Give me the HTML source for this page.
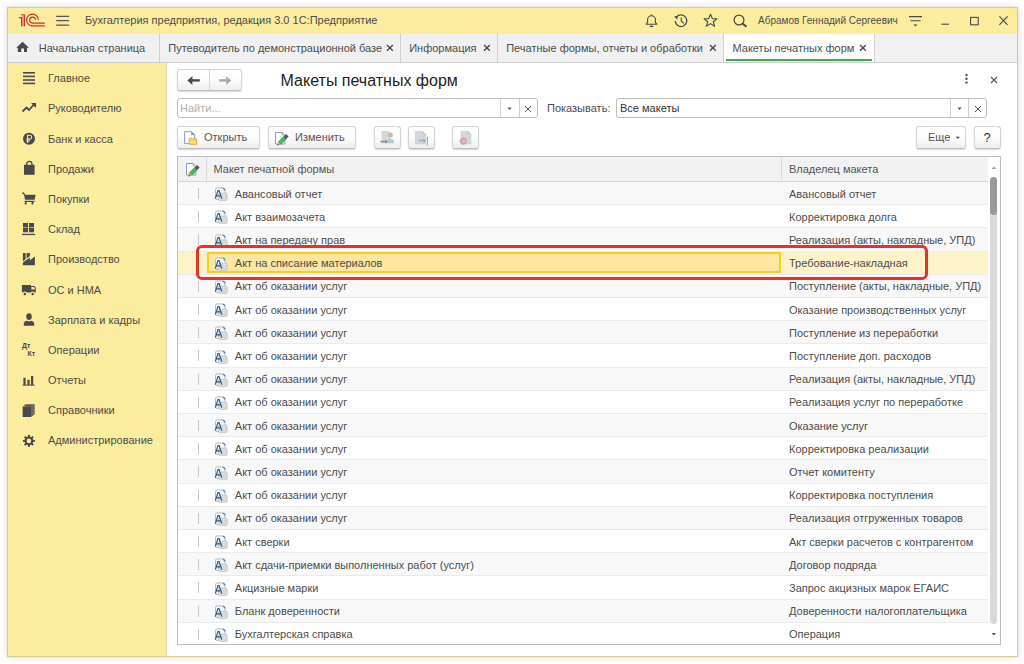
<!DOCTYPE html>
<html><head><meta charset="utf-8">
<style>
*{box-sizing:border-box;margin:0;padding:0}
html,body{width:1024px;height:664px;overflow:hidden;background:#fff;font-family:"Liberation Sans",sans-serif;font-size:11px;color:#4d4d4d}
.a{position:absolute}
.t{position:absolute;line-height:13px;white-space:nowrap}
svg{overflow:visible}
#win{left:7px;top:7px;width:1011px;height:650px;border:1px solid #dacb86;background:#fbec9e;box-shadow:0 0 7px rgba(0,0,0,.16)}
#tabs{left:8px;top:34px;width:1009px;height:29px;background:#f1f1f1;border-bottom:1px solid #cfcfcf}
#side{left:8px;top:63px;width:159px;height:593px;background:#fbec9e}
#main{left:167px;top:63px;width:850px;height:593px;background:#fff}
.tabsep{position:absolute;top:34px;width:1px;height:28px;background:#d0d0d0}
.btn{position:absolute;border:1px solid #d4d4d4;border-bottom-color:#bfbfbf;border-radius:3px;background:linear-gradient(#fff 0%,#fdfdfd 45%,#eeeeee 100%);box-shadow:0 1px 1.5px rgba(0,0,0,.16)}
.fld{position:absolute;border:1px solid #bcbcbc;border-radius:3px;background:#fff}
#tbl{left:177px;top:156px;width:824px;height:489px;border:1px solid #bdbdbd;background:#fff;overflow:hidden}
.row{position:absolute;left:0;width:810px;border-bottom:1px solid #ebebeb}
.row.g{background:#f8f8f8}
.tl{position:absolute;left:20px;width:1px;height:11px;background:#c8c8c8}
.c1{position:absolute;left:56.8px;line-height:13px;white-space:nowrap}
.c2{position:absolute;left:611px;line-height:13px;white-space:nowrap}
.x{position:absolute}
</style></head><body>
<div id="win" class="a"></div>

<svg class="a" style="left:0;top:0" width="50" height="32" viewBox="0 0 50 32">
 <rect x="22" y="15.2" width="2.2" height="11" fill="#eea08a"/>
 <g fill="none" stroke="#dc2a2a" stroke-width="1.15">
  <path d="M19 17.6 H21.6 V26.3"/>
  <path d="M21.2 14.7 H24.5 V26.3"/>
  <path d="M38.4 19.8 A5.9 5.9 0 1 0 32.4 25.9 H44.8"/>
  <path d="M35.6 19.8 A3 3 0 1 0 32.4 23.1 H44.8"/>
 </g>
</svg>
<svg class="a" style="left:56px;top:15px" width="14" height="12"><g stroke="#555" stroke-width="1.2" stroke-linecap="round"><path d="M0.7 1.45H12.7M0.7 5.6H12.7M0.7 10.2H12.7"/></g></svg>
<div class="t" style="left:85px;top:14.2px">Бухгалтерия предприятия, редакция 3.0 1С:Предприятие</div>

<svg class="a" style="left:644px;top:13px" width="15" height="15"><path d="M2.2 11.2 H12.8 L11.4 9.4 V6.6 a3.9 3.9 0 0 0 -7.8 0 V9.4 Z" fill="none" stroke="#4a4a4a" stroke-width="1.1" stroke-linejoin="round"/><path d="M7.5 1.4 V2.6" stroke="#4a4a4a" stroke-width="1.2"/><path d="M5.8 13.3 H9.2" stroke="#4a4a4a" stroke-width="1.4"/></svg>
<svg class="a" style="left:673px;top:13px" width="16" height="15"><path d="M3.4 4.2 A5.8 5.8 0 1 1 2.2 8" fill="none" stroke="#4a4a4a" stroke-width="1.2"/><path d="M1 3.4 L4.6 3 L4.2 6.4 Z" fill="#4a4a4a"/><path d="M8.2 4.6 V8 L10.8 10.4" fill="none" stroke="#4a4a4a" stroke-width="1.1"/></svg>
<svg class="a" style="left:703px;top:13px" width="15" height="15"><path d="M7.5 1.2 L9.3 5.6 L13.9 5.8 L10.3 8.7 L11.6 13.2 L7.5 10.6 L3.4 13.2 L4.7 8.7 L1.1 5.8 L5.7 5.6 Z" fill="none" stroke="#4a4a4a" stroke-width="1.1" stroke-linejoin="round"/></svg>
<svg class="a" style="left:733px;top:14px" width="15" height="14"><circle cx="6" cy="6" r="4.9" fill="none" stroke="#4a4a4a" stroke-width="1.2"/><path d="M9.6 9.6 L13.4 12.8" stroke="#4a4a4a" stroke-width="2"/></svg>
<div class="t" style="left:758px;top:14.2px;font-size:10px">Абрамов Геннадий Сергеевич</div>
<svg class="a" style="left:908px;top:14px" width="15" height="14"><path d="M1 2.6 H14 M2.4 6.7 H12.6" stroke="#4a4a4a" stroke-width="1.1"/><path d="M5.3 10.4 H9.5 L7.4 12.6 Z" fill="#4a4a4a"/></svg>
<svg class="a" style="left:940px;top:14px" width="10" height="12"><path d="M1.4 10.2 H9" stroke="#4a4a4a" stroke-width="1.1"/></svg>
<svg class="a" style="left:969px;top:16px" width="11" height="10"><rect x="1.6" y="1.4" width="7.6" height="7.4" fill="none" stroke="#4a4a4a" stroke-width="1.1"/></svg>
<svg class="a" style="left:998px;top:15px" width="11" height="11"><path d="M1.4 1.4 L9.6 9.8 M9.6 1.4 L1.4 9.8" stroke="#4a4a4a" stroke-width="1.1"/></svg>

<div id="tabs" class="a"></div>
<div class="a" style="left:724px;top:34px;width:150px;height:28px;background:#fff"></div>
<div class="a" style="left:726px;top:59px;width:146px;height:2px;background:#3fae49"></div>
<div class="tabsep" style="left:159px"></div>
<div class="tabsep" style="left:400px"></div>
<div class="tabsep" style="left:497px"></div>
<div class="tabsep" style="left:723px"></div>
<div class="tabsep" style="left:874px"></div>
<svg class="a" style="left:15px;top:40px" width="16" height="14"><path d="M7.6 1.8 L14 7.8 H12 V11.9 H9 V8.4 H6.2 V11.9 H2.8 V7.8 H1.2 Z" fill="#4a4a4a"/></svg>
<div class="t" style="left:38.8px;top:41.5px">Начальная страница</div>
<div class="t" style="left:168.3px;top:41.5px">Путеводитель по демонстрационной базе</div>
<svg class="a" style="left:386.09999999999997px;top:44.3px" width="8" height="8"><path d="M1 1 L6.8 6.8 M6.8 1 L1 6.8" stroke="#4a4a4a" stroke-width="1.35"/></svg>
<div class="t" style="left:409.2px;top:41.5px">Информация</div>
<svg class="a" style="left:483.0px;top:44.3px" width="8" height="8"><path d="M1 1 L6.8 6.8 M6.8 1 L1 6.8" stroke="#4a4a4a" stroke-width="1.35"/></svg>
<div class="t" style="left:506.2px;top:41.5px">Печатные формы, отчеты и обработки</div>
<svg class="a" style="left:709.4px;top:44.3px" width="8" height="8"><path d="M1 1 L6.8 6.8 M6.8 1 L1 6.8" stroke="#4a4a4a" stroke-width="1.35"/></svg>
<div class="t" style="left:732.5px;top:41.5px">Макеты печатных форм</div>
<svg class="a" style="left:859.4px;top:44.3px" width="8" height="8"><path d="M1 1 L6.8 6.8 M6.8 1 L1 6.8" stroke="#4a4a4a" stroke-width="1.35"/></svg>
<div id="side" class="a"></div>
<div id="main" class="a"></div>
<div class="a" style="left:166px;top:63px;width:1px;height:593px;background:#e4d9a2"></div>
<div class="t" style="left:48px;top:72.30px">Главное</div>
<div class="t" style="left:48px;top:102.48px">Руководителю</div>
<div class="t" style="left:48px;top:132.66px">Банк и касса</div>
<div class="t" style="left:48px;top:162.84px">Продажи</div>
<div class="t" style="left:48px;top:193.02px">Покупки</div>
<div class="t" style="left:48px;top:223.20px">Склад</div>
<div class="t" style="left:48px;top:253.38px">Производство</div>
<div class="t" style="left:48px;top:283.56px">ОС и НМА</div>
<div class="t" style="left:48px;top:313.74px">Зарплата и кадры</div>
<div class="t" style="left:48px;top:343.92px">Операции</div>
<div class="t" style="left:48px;top:374.10px">Отчеты</div>
<div class="t" style="left:48px;top:404.28px">Справочники</div>
<div class="t" style="left:48px;top:434.46px">Администрирование</div>
<svg class="a" style="left:22px;top:71px" width="14" height="14"><g fill="#4a4a4a"><rect x="1" y="1" width="12" height="1.6"/><rect x="1" y="4.6" width="12" height="1.6"/><rect x="1" y="8.2" width="12" height="1.6"/><rect x="1" y="11.6" width="12" height="1.6"/></g></svg>
<svg class="a" style="left:21px;top:102px" width="16" height="11"><path d="M1.5 9.5 L5.5 5.5 L8 8 L12.5 3" fill="none" stroke="#4a4a4a" stroke-width="1.8"/><path d="M10 1 H15 V6 Z" fill="#4a4a4a"/></svg>
<svg class="a" style="left:22px;top:132px" width="14" height="14"><circle cx="7" cy="6.8" r="6" fill="#4a4a4a"/><path d="M5.6 11 V3.3 H7.8 a1.9 1.9 0 0 1 0 3.8 H4.4 M4.4 9 H8" fill="none" stroke="#fbec9e" stroke-width="1.1"/></svg>
<svg class="a" style="left:22px;top:160px" width="14" height="16"><rect x="2" y="4.8" width="10.6" height="10" fill="#4a4a4a"/><path d="M4.6 7 V4 a2.7 2.7 0 0 1 5.4 0 V7" fill="none" stroke="#4a4a4a" stroke-width="1.3"/></svg>
<svg class="a" style="left:21px;top:192px" width="16" height="14"><path d="M1 1.2 H2.6 L3.6 3" fill="none" stroke="#4a4a4a" stroke-width="1.3"/><path d="M3 2.8 H14.7 L13.6 7.8 H4 Z" fill="#4a4a4a"/><rect x="3.6" y="8.8" width="10" height="1.2" fill="#4a4a4a"/><rect x="3.8" y="10" width="1.8" height="2.6" rx=".6" fill="#4a4a4a"/><rect x="10.6" y="10" width="1.8" height="2.6" rx=".6" fill="#4a4a4a"/></svg>
<svg class="a" style="left:21px;top:222px" width="15" height="14"><g fill="#4a4a4a"><rect x="2" y="1" width="5" height="4.4"/><rect x="8" y="1" width="5" height="4.4"/><rect x="2" y="6" width="5" height="4.3"/><rect x="8" y="6" width="5" height="4.3"/><rect x="1" y="11.8" width="13" height="1.3"/></g></svg>
<svg class="a" style="left:22px;top:252px" width="14" height="14"><g fill="#4a4a4a"><path d="M0.9 13.3 V10.6 L7.9 5.4 V8.2 L12.9 4.6 V13.3 Z"/><path d="M0.9 1.1 H3.6 V7.2 L0.9 9.2 Z"/><path d="M4.6 1.1 H7.9 V4 L4.6 6.45 Z"/></g></svg>
<svg class="a" style="left:21px;top:284px" width="16" height="12"><path d="M0.9 1.1 H10 V2 H13.4 L14.8 3.8 V8.6 H0.9 Z" fill="#4a4a4a"/><path d="M10.4 3 H12.9 L13.8 4.2 V5.6 H10.4 Z" fill="#fbec9e"/><circle cx="3.8" cy="9.9" r="2.3" fill="#fbec9e"/><circle cx="11.7" cy="9.9" r="2.3" fill="#fbec9e"/><circle cx="3.8" cy="9.9" r="1.25" fill="#4a4a4a"/><circle cx="11.7" cy="9.9" r="1.25" fill="#4a4a4a"/></svg>
<svg class="a" style="left:22px;top:312px" width="14" height="15"><ellipse cx="7" cy="4.6" rx="2.8" ry="3.4" fill="#4a4a4a"/><path d="M1.8 13.8 V11.6 Q2 9.6 4.4 8.8 Q7 9.8 9.6 8.8 Q12 9.6 12.2 11.6 V13.8 Z" fill="#4a4a4a"/></svg>
<div class="a" style="left:22px;top:342px;font-size:7px;line-height:7px;font-weight:bold;color:#4a4a4a">Дт</div><div class="a" style="left:27.5px;top:349.5px;font-size:7px;line-height:7px;font-weight:bold;color:#4a4a4a">Кт</div>
<svg class="a" style="left:22px;top:375px" width="14" height="12"><g fill="#4a4a4a"><rect x="1.4" y="2.8" width="2.2" height="7.4"/><rect x="5.4" y="4.8" width="2.2" height="5.4"/><rect x="9" y="1" width="2.2" height="9.2"/><rect x="0.6" y="9.6" width="12" height="1"/></g></svg>
<svg class="a" style="left:22px;top:403px" width="14" height="15"><path d="M3 1 H12.6 V11 L9 13 Z" fill="#a09a74"/><path d="M2.2 1.6 H12 V11.4 L8.6 13.6" fill="none" stroke="#fbec9e" stroke-width=".6"/><rect x="0.6" y="3.8" width="8.4" height="10.2" fill="#4a4a4a"/><path d="M0.6 3.8 L3.4 1.2 H12.6 L9 3.8" fill="#4a4a4a" opacity=".8"/><path d="M9 3.8 L12.6 1.2 V11.6 L9 14 Z" fill="#6d6a58"/></svg>
<svg class="a" style="left:22px;top:434px" width="14" height="14"><g transform="translate(6.9 6.9)" fill="#4a4a4a"><circle r="4.3"/><rect x="-1" y="-6" width="2" height="3" transform="rotate(0)"/><rect x="-1" y="-6" width="2" height="3" transform="rotate(45)"/><rect x="-1" y="-6" width="2" height="3" transform="rotate(90)"/><rect x="-1" y="-6" width="2" height="3" transform="rotate(135)"/><rect x="-1" y="-6" width="2" height="3" transform="rotate(180)"/><rect x="-1" y="-6" width="2" height="3" transform="rotate(225)"/><rect x="-1" y="-6" width="2" height="3" transform="rotate(270)"/><rect x="-1" y="-6" width="2" height="3" transform="rotate(315)"/><circle r="2.3" fill="#fbec9e"/></g></svg>
<div class="btn" style="left:177px;top:69.3px;width:65px;height:21.5px"></div>
<div class="a" style="left:209px;top:70px;width:1px;height:20px;background:#d6d6d6"></div>
<svg class="a" style="left:186px;top:75px" width="16" height="12"><path d="M4 5.4 H13.8" stroke="#4a4a4a" stroke-width="2.4"/><path d="M1.4 5.4 L6.4 0.9 V9.9 Z" fill="#4a4a4a"/></svg>
<svg class="a" style="left:218px;top:75px" width="16" height="12"><path d="M1.2 5.4 H11" stroke="#a8a8a8" stroke-width="2.4"/><path d="M13.2 5.4 L8.2 0.9 V9.9 Z" fill="#a8a8a8"/></svg>
<div class="t" style="left:280.6px;top:70.6px;font-size:16px;line-height:20px;color:#1e1e1e">Макеты печатных форм</div>
<svg class="a" style="left:964px;top:73px" width="5" height="12"><g fill="#555"><circle cx="2.5" cy="2" r="1.2"/><circle cx="2.5" cy="5.8" r="1.2"/><circle cx="2.5" cy="9.6" r="1.2"/></g></svg>
<svg class="a" style="left:990px;top:76px" width="8" height="8"><path d="M1 1 L7 7 M7 1 L1 7" stroke="#555" stroke-width="1.1"/></svg>

<div class="fld" style="left:177px;top:98px;width:361px;height:20px"></div>
<div class="t" style="left:180px;top:102.2px;color:#b0b0b0">Найти...</div>
<div class="a" style="left:500px;top:99px;width:1px;height:18px;background:#d0d0d0"></div>
<div class="a" style="left:519px;top:99px;width:1px;height:18px;background:#d0d0d0"></div>
<svg class="a" style="left:507px;top:107px" width="6" height="4"><path d="M0.6 0.6 H4.6 L2.6 3 Z" fill="#4a4a4a"/></svg>
<svg class="a" style="left:524px;top:105.3px" width="8" height="8"><path d="M1 1 L7 7 M7 1 L1 7" stroke="#555" stroke-width="1"/></svg>
<div class="t" style="left:547px;top:102.2px">Показывать:</div>
<div class="fld" style="left:616px;top:98px;width:371px;height:20px"></div>
<div class="t" style="left:620px;top:102.2px;color:#333">Все макеты</div>
<div class="a" style="left:950px;top:99px;width:1px;height:18px;background:#d0d0d0"></div>
<div class="a" style="left:968px;top:99px;width:1px;height:18px;background:#d0d0d0"></div>
<svg class="a" style="left:957px;top:107px" width="6" height="4"><path d="M0.6 0.6 H4.6 L2.6 3 Z" fill="#4a4a4a"/></svg>
<svg class="a" style="left:974px;top:105.3px" width="8" height="8"><path d="M1 1 L7 7 M7 1 L1 7" stroke="#555" stroke-width="1"/></svg>

<div class="btn" style="left:177px;top:126px;width:83px;height:23px"></div>
<svg class="a" style="left:183px;top:130px" width="16" height="16"><path d="M1.6 1.6 H8.4 L11.6 4.8 V13.6 H1.6 Z" fill="#fbfcfd" stroke="#8e9cab" stroke-width="1"/><path d="M8.2 1.2 L12 5 H8.2 Z" fill="#8e9cab"/><path d="M6.4 8.2 H8.8 L9.4 8.8 H13.6 V14.4 H6.4 Z" fill="#fbe07a" stroke="#d8aa52" stroke-width=".9"/><path d="M6.8 10.2 H13.2" stroke="#e2bd5e" stroke-width=".7"/></svg>
<div class="t" style="left:204px;top:131.2px;color:#555">Открыть</div>
<div class="btn" style="left:268px;top:126px;width:88px;height:23px"></div>
<svg class="a" style="left:274px;top:131px" width="16" height="16"><path d="M1.5 1.5 H8.2 L10.8 4.1 V13 H1.5 Z" fill="#fbfcfd" stroke="#8e9cab" stroke-width="1"/><path d="M8.2 1.5 V4.1 H10.8" fill="none" stroke="#8e9cab" stroke-width=".8"/><path d="M3.4 14.4 L4.5 10.7 L7 13.2 Z" fill="#d2a256"/><path d="M3.4 14.4 L3.9 12.7 L5.1 13.9 Z" fill="#5a4630"/><path d="M4.5 10.7 L9.5 5.7 L12 8.2 L7 13.2 Z" fill="#4cbc5a" stroke="#2e8a3c" stroke-width=".6"/><path d="M9.5 5.7 L12.1 3.1 L14.6 5.6 L12 8.2 Z" fill="#4d5866"/></svg>
<div class="t" style="left:295px;top:131.2px;color:#555">Изменить</div>
<div class="btn" style="left:374px;top:126px;width:27px;height:23px"></div>
<div class="btn" style="left:408px;top:126px;width:27px;height:23px"></div>
<div class="btn" style="left:452px;top:126px;width:27px;height:23px"></div>
<svg class="a" style="left:380px;top:131px" width="16" height="14"><rect x="2" y="0.4" width="7.4" height="11.6" fill="#d5d8dc" stroke="#c6cbd1" stroke-width=".5"/><circle cx="10.4" cy="4" r="2.5" fill="#c6bba9"/><path d="M6.6 12.2 Q6.6 7.8 10.4 7.4 Q14.2 7.8 14.2 12.2 Z" fill="#b4c7d5"/><path d="M0.4 10.6 H6" stroke="#8f8f8f" stroke-width="1.5"/><path d="M5 8.4 L7.8 10.6 L5 12.8 Z" fill="#8f8f8f"/></svg>
<svg class="a" style="left:414px;top:131px" width="16" height="16"><path d="M1.3 0.2 H8.6 L11.9 3.5 V12.9 H1.3 Z" fill="#d3d6da" stroke="#c4c9ce" stroke-width=".5"/><path d="M8.6 0.2 V3.5 H11.9" fill="#bfc5cc"/><path d="M4.8 9.6 H10.6" stroke="#9aadb9" stroke-width="1.5"/><path d="M9.4 7.2 L12.2 9.6 L9.4 12 Z" fill="#9aadb9"/><path d="M13.4 6 V14.2" stroke="#9aadb9" stroke-width="1.1"/></svg>
<svg class="a" style="left:458px;top:131px" width="16" height="16"><path d="M3 0.2 H10 L13 3.2 V12.9 H3 Z" fill="#d3d6da" stroke="#c4c9ce" stroke-width=".5"/><path d="M10 0.2 V3.2 H13" fill="none" stroke="#b8bec5" stroke-width=".6"/><circle cx="5.4" cy="10.1" r="3.7" fill="#cfa7a8"/><path d="M4 8.7 L6.8 11.5 M6.8 8.7 L4 11.5" stroke="#e6d6d6" stroke-width=".8"/></svg>
<div class="btn" style="left:916px;top:126px;width:50px;height:23px"></div>
<div class="t" style="left:928px;top:131.2px;color:#555">Еще</div>
<svg class="a" style="left:955px;top:136px" width="6" height="4"><path d="M0.6 0.8 H5 L2.8 3 Z" fill="#4a4a4a"/></svg>
<div class="btn" style="left:974px;top:126px;width:27px;height:23px"></div>
<div class="t" style="left:983.5px;top:130.6px;font-size:13px;line-height:14px;color:#333">?</div>

<div id="tbl" class="a">
<div class="a" style="left:0;top:0;width:810px;height:25px;background:#f2f2f2;border-bottom:1px solid #d6d6d6"></div>
<div class="a" style="left:28px;top:0;width:1px;height:25px;background:#dcdcdc"></div>
<div class="a" style="left:603px;top:0;width:1px;height:25px;background:#dcdcdc"></div>
<svg class="a" style="left:7px;top:5px" width="16" height="16"><path d="M1.5 1.5 H8.2 L10.8 4.1 V13 H1.5 Z" fill="#fbfcfd" stroke="#8e9cab" stroke-width="1"/><path d="M8.2 1.5 V4.1 H10.8" fill="none" stroke="#8e9cab" stroke-width=".8"/><path d="M3.4 14.4 L4.5 10.7 L7 13.2 Z" fill="#d2a256"/><path d="M3.4 14.4 L3.9 12.7 L5.1 13.9 Z" fill="#5a4630"/><path d="M4.5 10.7 L9.5 5.7 L12 8.2 L7 13.2 Z" fill="#4cbc5a" stroke="#2e8a3c" stroke-width=".6"/><path d="M9.5 5.7 L12.1 3.1 L14.6 5.6 L12 8.2 Z" fill="#4d5866"/></svg>
<div class="t" style="left:35.5px;top:5.5px;color:#555">Макет печатной формы</div>
<div class="t" style="left:611px;top:5.5px;color:#555">Владелец макета</div>
<div class="row g" style="top:25.00px;height:23.20px;"></div>
<div class="tl" style="top:31.00px"></div>
<svg class="a" style="left:35.5px;top:30.20px" width="15" height="15"><rect x="1.5" y="0.9" width="9.6" height="11.6" rx="1.6" fill="#f3f5f7" stroke="#a9b5c1" stroke-width=".9"/><path d="M8.4 0.9 H9.8 L11.1 2.2 V4 Z" fill="#4f7fae"/><rect x="4.4" y="6.2" width="8.8" height="7.2" rx="1.2" fill="#e2e4e6" stroke="#b9bdc1" stroke-width=".7"/><path d="M4.6 8.2 H13 M4.6 10 H13 M4.6 11.8 H13" stroke="#c6c9cc" stroke-width=".7"/><path d="M1.3 11.6 L4 3.6 H5.1 L7.8 11.6 M2.5 8.8 H6.7" fill="none" stroke="#2c5b85" stroke-width="1.2"/></svg>
<div class="c1" style="top:30.50px">Авансовый отчет</div>
<div class="c2" style="top:30.50px">Авансовый отчет</div>
<div class="row" style="top:48.20px;height:23.20px;"></div>
<div class="tl" style="top:54.20px"></div>
<svg class="a" style="left:35.5px;top:53.40px" width="15" height="15"><rect x="1.5" y="0.9" width="9.6" height="11.6" rx="1.6" fill="#f3f5f7" stroke="#a9b5c1" stroke-width=".9"/><path d="M8.4 0.9 H9.8 L11.1 2.2 V4 Z" fill="#4f7fae"/><rect x="4.4" y="6.2" width="8.8" height="7.2" rx="1.2" fill="#e2e4e6" stroke="#b9bdc1" stroke-width=".7"/><path d="M4.6 8.2 H13 M4.6 10 H13 M4.6 11.8 H13" stroke="#c6c9cc" stroke-width=".7"/><path d="M1.3 11.6 L4 3.6 H5.1 L7.8 11.6 M2.5 8.8 H6.7" fill="none" stroke="#2c5b85" stroke-width="1.2"/></svg>
<div class="c1" style="top:53.70px">Акт взаимозачета</div>
<div class="c2" style="top:53.70px">Корректировка долга</div>
<div class="row g" style="top:71.40px;height:23.20px;"></div>
<div class="tl" style="top:77.40px"></div>
<svg class="a" style="left:35.5px;top:76.60px" width="15" height="15"><rect x="1.5" y="0.9" width="9.6" height="11.6" rx="1.6" fill="#f3f5f7" stroke="#a9b5c1" stroke-width=".9"/><path d="M8.4 0.9 H9.8 L11.1 2.2 V4 Z" fill="#4f7fae"/><rect x="4.4" y="6.2" width="8.8" height="7.2" rx="1.2" fill="#e2e4e6" stroke="#b9bdc1" stroke-width=".7"/><path d="M4.6 8.2 H13 M4.6 10 H13 M4.6 11.8 H13" stroke="#c6c9cc" stroke-width=".7"/><path d="M1.3 11.6 L4 3.6 H5.1 L7.8 11.6 M2.5 8.8 H6.7" fill="none" stroke="#2c5b85" stroke-width="1.2"/></svg>
<div class="c1" style="top:76.90px">Акт на передачу прав</div>
<div class="c2" style="top:76.90px">Реализация (акты, накладные, УПД)</div>
<div class="row" style="top:94.60px;height:23.20px;background:#fdf3c9;"></div>
<div class="a" style="left:28.9px;top:95.10px;width:574px;height:21px;background:#fce6a0;border:2.2px solid #f7cd22"></div>
<div class="tl" style="top:100.60px"></div>
<svg class="a" style="left:35.5px;top:99.80px" width="15" height="15"><rect x="1.5" y="0.9" width="9.6" height="11.6" rx="1.6" fill="#f3f5f7" stroke="#a9b5c1" stroke-width=".9"/><path d="M8.4 0.9 H9.8 L11.1 2.2 V4 Z" fill="#4f7fae"/><rect x="4.4" y="6.2" width="8.8" height="7.2" rx="1.2" fill="#e2e4e6" stroke="#b9bdc1" stroke-width=".7"/><path d="M4.6 8.2 H13 M4.6 10 H13 M4.6 11.8 H13" stroke="#c6c9cc" stroke-width=".7"/><path d="M1.3 11.6 L4 3.6 H5.1 L7.8 11.6 M2.5 8.8 H6.7" fill="none" stroke="#2c5b85" stroke-width="1.2"/></svg>
<div class="c1" style="top:100.10px">Акт на списание материалов</div>
<div class="c2" style="top:100.10px">Требование-накладная</div>
<div class="row g" style="top:117.80px;height:23.20px;"></div>
<div class="tl" style="top:123.80px"></div>
<svg class="a" style="left:35.5px;top:123.00px" width="15" height="15"><rect x="1.5" y="0.9" width="9.6" height="11.6" rx="1.6" fill="#f3f5f7" stroke="#a9b5c1" stroke-width=".9"/><path d="M8.4 0.9 H9.8 L11.1 2.2 V4 Z" fill="#4f7fae"/><rect x="4.4" y="6.2" width="8.8" height="7.2" rx="1.2" fill="#e2e4e6" stroke="#b9bdc1" stroke-width=".7"/><path d="M4.6 8.2 H13 M4.6 10 H13 M4.6 11.8 H13" stroke="#c6c9cc" stroke-width=".7"/><path d="M1.3 11.6 L4 3.6 H5.1 L7.8 11.6 M2.5 8.8 H6.7" fill="none" stroke="#2c5b85" stroke-width="1.2"/></svg>
<div class="c1" style="top:123.30px">Акт об оказании услуг</div>
<div class="c2" style="top:123.30px">Поступление (акты, накладные, УПД)</div>
<div class="row" style="top:141.00px;height:23.20px;"></div>
<div class="tl" style="top:147.00px"></div>
<svg class="a" style="left:35.5px;top:146.20px" width="15" height="15"><rect x="1.5" y="0.9" width="9.6" height="11.6" rx="1.6" fill="#f3f5f7" stroke="#a9b5c1" stroke-width=".9"/><path d="M8.4 0.9 H9.8 L11.1 2.2 V4 Z" fill="#4f7fae"/><rect x="4.4" y="6.2" width="8.8" height="7.2" rx="1.2" fill="#e2e4e6" stroke="#b9bdc1" stroke-width=".7"/><path d="M4.6 8.2 H13 M4.6 10 H13 M4.6 11.8 H13" stroke="#c6c9cc" stroke-width=".7"/><path d="M1.3 11.6 L4 3.6 H5.1 L7.8 11.6 M2.5 8.8 H6.7" fill="none" stroke="#2c5b85" stroke-width="1.2"/></svg>
<div class="c1" style="top:146.50px">Акт об оказании услуг</div>
<div class="c2" style="top:146.50px">Оказание производственных услуг</div>
<div class="row g" style="top:164.20px;height:23.20px;"></div>
<div class="tl" style="top:170.20px"></div>
<svg class="a" style="left:35.5px;top:169.40px" width="15" height="15"><rect x="1.5" y="0.9" width="9.6" height="11.6" rx="1.6" fill="#f3f5f7" stroke="#a9b5c1" stroke-width=".9"/><path d="M8.4 0.9 H9.8 L11.1 2.2 V4 Z" fill="#4f7fae"/><rect x="4.4" y="6.2" width="8.8" height="7.2" rx="1.2" fill="#e2e4e6" stroke="#b9bdc1" stroke-width=".7"/><path d="M4.6 8.2 H13 M4.6 10 H13 M4.6 11.8 H13" stroke="#c6c9cc" stroke-width=".7"/><path d="M1.3 11.6 L4 3.6 H5.1 L7.8 11.6 M2.5 8.8 H6.7" fill="none" stroke="#2c5b85" stroke-width="1.2"/></svg>
<div class="c1" style="top:169.70px">Акт об оказании услуг</div>
<div class="c2" style="top:169.70px">Поступление из переработки</div>
<div class="row" style="top:187.40px;height:23.20px;"></div>
<div class="tl" style="top:193.40px"></div>
<svg class="a" style="left:35.5px;top:192.60px" width="15" height="15"><rect x="1.5" y="0.9" width="9.6" height="11.6" rx="1.6" fill="#f3f5f7" stroke="#a9b5c1" stroke-width=".9"/><path d="M8.4 0.9 H9.8 L11.1 2.2 V4 Z" fill="#4f7fae"/><rect x="4.4" y="6.2" width="8.8" height="7.2" rx="1.2" fill="#e2e4e6" stroke="#b9bdc1" stroke-width=".7"/><path d="M4.6 8.2 H13 M4.6 10 H13 M4.6 11.8 H13" stroke="#c6c9cc" stroke-width=".7"/><path d="M1.3 11.6 L4 3.6 H5.1 L7.8 11.6 M2.5 8.8 H6.7" fill="none" stroke="#2c5b85" stroke-width="1.2"/></svg>
<div class="c1" style="top:192.90px">Акт об оказании услуг</div>
<div class="c2" style="top:192.90px">Поступление доп. расходов</div>
<div class="row g" style="top:210.60px;height:23.20px;"></div>
<div class="tl" style="top:216.60px"></div>
<svg class="a" style="left:35.5px;top:215.80px" width="15" height="15"><rect x="1.5" y="0.9" width="9.6" height="11.6" rx="1.6" fill="#f3f5f7" stroke="#a9b5c1" stroke-width=".9"/><path d="M8.4 0.9 H9.8 L11.1 2.2 V4 Z" fill="#4f7fae"/><rect x="4.4" y="6.2" width="8.8" height="7.2" rx="1.2" fill="#e2e4e6" stroke="#b9bdc1" stroke-width=".7"/><path d="M4.6 8.2 H13 M4.6 10 H13 M4.6 11.8 H13" stroke="#c6c9cc" stroke-width=".7"/><path d="M1.3 11.6 L4 3.6 H5.1 L7.8 11.6 M2.5 8.8 H6.7" fill="none" stroke="#2c5b85" stroke-width="1.2"/></svg>
<div class="c1" style="top:216.10px">Акт об оказании услуг</div>
<div class="c2" style="top:216.10px">Реализация (акты, накладные, УПД)</div>
<div class="row" style="top:233.80px;height:23.20px;"></div>
<div class="tl" style="top:239.80px"></div>
<svg class="a" style="left:35.5px;top:239.00px" width="15" height="15"><rect x="1.5" y="0.9" width="9.6" height="11.6" rx="1.6" fill="#f3f5f7" stroke="#a9b5c1" stroke-width=".9"/><path d="M8.4 0.9 H9.8 L11.1 2.2 V4 Z" fill="#4f7fae"/><rect x="4.4" y="6.2" width="8.8" height="7.2" rx="1.2" fill="#e2e4e6" stroke="#b9bdc1" stroke-width=".7"/><path d="M4.6 8.2 H13 M4.6 10 H13 M4.6 11.8 H13" stroke="#c6c9cc" stroke-width=".7"/><path d="M1.3 11.6 L4 3.6 H5.1 L7.8 11.6 M2.5 8.8 H6.7" fill="none" stroke="#2c5b85" stroke-width="1.2"/></svg>
<div class="c1" style="top:239.30px">Акт об оказании услуг</div>
<div class="c2" style="top:239.30px">Реализация услуг по переработке</div>
<div class="row g" style="top:257.00px;height:23.20px;"></div>
<div class="tl" style="top:263.00px"></div>
<svg class="a" style="left:35.5px;top:262.20px" width="15" height="15"><rect x="1.5" y="0.9" width="9.6" height="11.6" rx="1.6" fill="#f3f5f7" stroke="#a9b5c1" stroke-width=".9"/><path d="M8.4 0.9 H9.8 L11.1 2.2 V4 Z" fill="#4f7fae"/><rect x="4.4" y="6.2" width="8.8" height="7.2" rx="1.2" fill="#e2e4e6" stroke="#b9bdc1" stroke-width=".7"/><path d="M4.6 8.2 H13 M4.6 10 H13 M4.6 11.8 H13" stroke="#c6c9cc" stroke-width=".7"/><path d="M1.3 11.6 L4 3.6 H5.1 L7.8 11.6 M2.5 8.8 H6.7" fill="none" stroke="#2c5b85" stroke-width="1.2"/></svg>
<div class="c1" style="top:262.50px">Акт об оказании услуг</div>
<div class="c2" style="top:262.50px">Оказание услуг</div>
<div class="row" style="top:280.20px;height:23.20px;"></div>
<div class="tl" style="top:286.20px"></div>
<svg class="a" style="left:35.5px;top:285.40px" width="15" height="15"><rect x="1.5" y="0.9" width="9.6" height="11.6" rx="1.6" fill="#f3f5f7" stroke="#a9b5c1" stroke-width=".9"/><path d="M8.4 0.9 H9.8 L11.1 2.2 V4 Z" fill="#4f7fae"/><rect x="4.4" y="6.2" width="8.8" height="7.2" rx="1.2" fill="#e2e4e6" stroke="#b9bdc1" stroke-width=".7"/><path d="M4.6 8.2 H13 M4.6 10 H13 M4.6 11.8 H13" stroke="#c6c9cc" stroke-width=".7"/><path d="M1.3 11.6 L4 3.6 H5.1 L7.8 11.6 M2.5 8.8 H6.7" fill="none" stroke="#2c5b85" stroke-width="1.2"/></svg>
<div class="c1" style="top:285.70px">Акт об оказании услуг</div>
<div class="c2" style="top:285.70px">Корректировка реализации</div>
<div class="row g" style="top:303.40px;height:23.20px;"></div>
<div class="tl" style="top:309.40px"></div>
<svg class="a" style="left:35.5px;top:308.60px" width="15" height="15"><rect x="1.5" y="0.9" width="9.6" height="11.6" rx="1.6" fill="#f3f5f7" stroke="#a9b5c1" stroke-width=".9"/><path d="M8.4 0.9 H9.8 L11.1 2.2 V4 Z" fill="#4f7fae"/><rect x="4.4" y="6.2" width="8.8" height="7.2" rx="1.2" fill="#e2e4e6" stroke="#b9bdc1" stroke-width=".7"/><path d="M4.6 8.2 H13 M4.6 10 H13 M4.6 11.8 H13" stroke="#c6c9cc" stroke-width=".7"/><path d="M1.3 11.6 L4 3.6 H5.1 L7.8 11.6 M2.5 8.8 H6.7" fill="none" stroke="#2c5b85" stroke-width="1.2"/></svg>
<div class="c1" style="top:308.90px">Акт об оказании услуг</div>
<div class="c2" style="top:308.90px">Отчет комитенту</div>
<div class="row" style="top:326.60px;height:23.20px;"></div>
<div class="tl" style="top:332.60px"></div>
<svg class="a" style="left:35.5px;top:331.80px" width="15" height="15"><rect x="1.5" y="0.9" width="9.6" height="11.6" rx="1.6" fill="#f3f5f7" stroke="#a9b5c1" stroke-width=".9"/><path d="M8.4 0.9 H9.8 L11.1 2.2 V4 Z" fill="#4f7fae"/><rect x="4.4" y="6.2" width="8.8" height="7.2" rx="1.2" fill="#e2e4e6" stroke="#b9bdc1" stroke-width=".7"/><path d="M4.6 8.2 H13 M4.6 10 H13 M4.6 11.8 H13" stroke="#c6c9cc" stroke-width=".7"/><path d="M1.3 11.6 L4 3.6 H5.1 L7.8 11.6 M2.5 8.8 H6.7" fill="none" stroke="#2c5b85" stroke-width="1.2"/></svg>
<div class="c1" style="top:332.10px">Акт об оказании услуг</div>
<div class="c2" style="top:332.10px">Корректировка поступления</div>
<div class="row g" style="top:349.80px;height:23.20px;"></div>
<div class="tl" style="top:355.80px"></div>
<svg class="a" style="left:35.5px;top:355.00px" width="15" height="15"><rect x="1.5" y="0.9" width="9.6" height="11.6" rx="1.6" fill="#f3f5f7" stroke="#a9b5c1" stroke-width=".9"/><path d="M8.4 0.9 H9.8 L11.1 2.2 V4 Z" fill="#4f7fae"/><rect x="4.4" y="6.2" width="8.8" height="7.2" rx="1.2" fill="#e2e4e6" stroke="#b9bdc1" stroke-width=".7"/><path d="M4.6 8.2 H13 M4.6 10 H13 M4.6 11.8 H13" stroke="#c6c9cc" stroke-width=".7"/><path d="M1.3 11.6 L4 3.6 H5.1 L7.8 11.6 M2.5 8.8 H6.7" fill="none" stroke="#2c5b85" stroke-width="1.2"/></svg>
<div class="c1" style="top:355.30px">Акт об оказании услуг</div>
<div class="c2" style="top:355.30px">Реализация отгруженных товаров</div>
<div class="row" style="top:373.00px;height:23.20px;"></div>
<div class="tl" style="top:379.00px"></div>
<svg class="a" style="left:35.5px;top:378.20px" width="15" height="15"><rect x="1.5" y="0.9" width="9.6" height="11.6" rx="1.6" fill="#f3f5f7" stroke="#a9b5c1" stroke-width=".9"/><path d="M8.4 0.9 H9.8 L11.1 2.2 V4 Z" fill="#4f7fae"/><rect x="4.4" y="6.2" width="8.8" height="7.2" rx="1.2" fill="#e2e4e6" stroke="#b9bdc1" stroke-width=".7"/><path d="M4.6 8.2 H13 M4.6 10 H13 M4.6 11.8 H13" stroke="#c6c9cc" stroke-width=".7"/><path d="M1.3 11.6 L4 3.6 H5.1 L7.8 11.6 M2.5 8.8 H6.7" fill="none" stroke="#2c5b85" stroke-width="1.2"/></svg>
<div class="c1" style="top:378.50px">Акт сверки</div>
<div class="c2" style="top:378.50px">Акт сверки расчетов с контрагентом</div>
<div class="row g" style="top:396.20px;height:23.20px;"></div>
<div class="tl" style="top:402.20px"></div>
<svg class="a" style="left:35.5px;top:401.40px" width="15" height="15"><rect x="1.5" y="0.9" width="9.6" height="11.6" rx="1.6" fill="#f3f5f7" stroke="#a9b5c1" stroke-width=".9"/><path d="M8.4 0.9 H9.8 L11.1 2.2 V4 Z" fill="#4f7fae"/><rect x="4.4" y="6.2" width="8.8" height="7.2" rx="1.2" fill="#e2e4e6" stroke="#b9bdc1" stroke-width=".7"/><path d="M4.6 8.2 H13 M4.6 10 H13 M4.6 11.8 H13" stroke="#c6c9cc" stroke-width=".7"/><path d="M1.3 11.6 L4 3.6 H5.1 L7.8 11.6 M2.5 8.8 H6.7" fill="none" stroke="#2c5b85" stroke-width="1.2"/></svg>
<div class="c1" style="top:401.70px">Акт сдачи-приемки выполненных работ (услуг)</div>
<div class="c2" style="top:401.70px">Договор подряда</div>
<div class="row" style="top:419.40px;height:23.20px;"></div>
<div class="tl" style="top:425.40px"></div>
<svg class="a" style="left:35.5px;top:424.60px" width="15" height="15"><rect x="1.5" y="0.9" width="9.6" height="11.6" rx="1.6" fill="#f3f5f7" stroke="#a9b5c1" stroke-width=".9"/><path d="M8.4 0.9 H9.8 L11.1 2.2 V4 Z" fill="#4f7fae"/><rect x="4.4" y="6.2" width="8.8" height="7.2" rx="1.2" fill="#e2e4e6" stroke="#b9bdc1" stroke-width=".7"/><path d="M4.6 8.2 H13 M4.6 10 H13 M4.6 11.8 H13" stroke="#c6c9cc" stroke-width=".7"/><path d="M1.3 11.6 L4 3.6 H5.1 L7.8 11.6 M2.5 8.8 H6.7" fill="none" stroke="#2c5b85" stroke-width="1.2"/></svg>
<div class="c1" style="top:424.90px">Акцизные марки</div>
<div class="c2" style="top:424.90px">Запрос акцизных марок ЕГАИС</div>
<div class="row g" style="top:442.60px;height:23.20px;"></div>
<div class="tl" style="top:448.60px"></div>
<svg class="a" style="left:35.5px;top:447.80px" width="15" height="15"><rect x="1.5" y="0.9" width="9.6" height="11.6" rx="1.6" fill="#f3f5f7" stroke="#a9b5c1" stroke-width=".9"/><path d="M8.4 0.9 H9.8 L11.1 2.2 V4 Z" fill="#4f7fae"/><rect x="4.4" y="6.2" width="8.8" height="7.2" rx="1.2" fill="#e2e4e6" stroke="#b9bdc1" stroke-width=".7"/><path d="M4.6 8.2 H13 M4.6 10 H13 M4.6 11.8 H13" stroke="#c6c9cc" stroke-width=".7"/><path d="M1.3 11.6 L4 3.6 H5.1 L7.8 11.6 M2.5 8.8 H6.7" fill="none" stroke="#2c5b85" stroke-width="1.2"/></svg>
<div class="c1" style="top:448.10px">Бланк доверенности</div>
<div class="c2" style="top:448.10px">Доверенности налогоплательщика</div>
<div class="row" style="top:465.80px;height:23.20px;"></div>
<div class="tl" style="top:471.80px"></div>
<svg class="a" style="left:35.5px;top:471.00px" width="15" height="15"><rect x="1.5" y="0.9" width="9.6" height="11.6" rx="1.6" fill="#f3f5f7" stroke="#a9b5c1" stroke-width=".9"/><path d="M8.4 0.9 H9.8 L11.1 2.2 V4 Z" fill="#4f7fae"/><rect x="4.4" y="6.2" width="8.8" height="7.2" rx="1.2" fill="#e2e4e6" stroke="#b9bdc1" stroke-width=".7"/><path d="M4.6 8.2 H13 M4.6 10 H13 M4.6 11.8 H13" stroke="#c6c9cc" stroke-width=".7"/><path d="M1.3 11.6 L4 3.6 H5.1 L7.8 11.6 M2.5 8.8 H6.7" fill="none" stroke="#2c5b85" stroke-width="1.2"/></svg>
<div class="c1" style="top:471.30px">Бухгалтерская справка</div>
<div class="c2" style="top:471.30px">Операция</div>
<div class="a" style="left:812px;top:20px;width:7px;height:447px;border-radius:3.5px;background:#d9d9d9"></div>
<div class="a" style="left:812px;top:20px;width:7px;height:38px;border-radius:3.5px;background:#9a9a9a"></div>
<svg class="a" style="left:813px;top:8px" width="6" height="5"><path d="M0.6 4 H5 L2.8 1.4 Z" fill="#9a9a9a"/></svg>
<svg class="a" style="left:813px;top:475px" width="6" height="5"><path d="M0.6 1 H5 L2.8 3.6 Z" fill="#555"/></svg>
</div>
<div class="a" style="left:196.2px;top:245px;width:732.3px;height:35.3px;border:3.3px solid #e0342c;border-radius:6px"></div>
</body></html>
